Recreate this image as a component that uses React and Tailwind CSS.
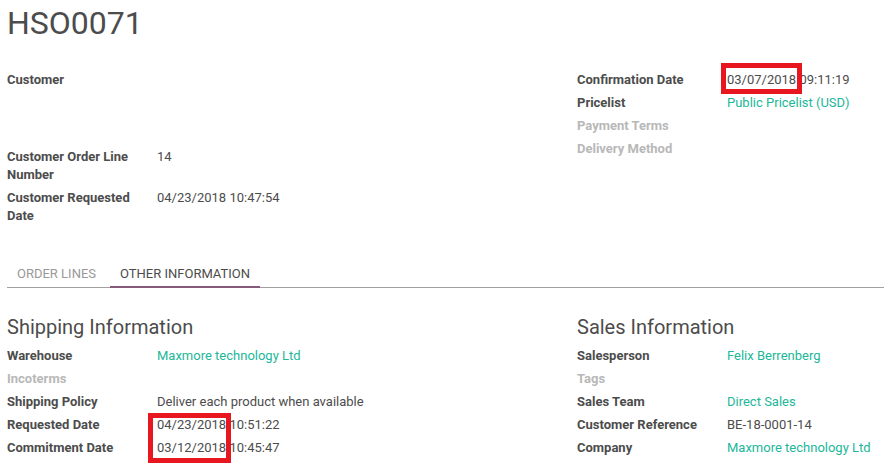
import React from "react";

const Field = ({ label, children, muted }) => (
  <div className="flex">
    <div
      className={`w-[150px] shrink-0 pr-[12px] font-bold ${
        muted ? "text-[#b8b8b8]" : "text-[#4c4c4c]"
      }`}
    >
      {label}
    </div>
    <div className="text-[#4c4c4c]">{children}</div>
  </div>
);

const Link = ({ children }) => (
  <span className="text-[#21b799]">{children}</span>
);

// red annotation box drawn over a date value
const Marked = ({ children, box }) => (
  <span className="relative">
    {children}
    <span className={`pointer-events-none absolute border-[5px] border-[#e8161e] ${box}`} />
  </span>
);

export default function App() {
  return (
    <div
      className="w-[884px] h-[464px] overflow-hidden bg-white pl-[7px] text-[13px] leading-[18px] text-[#4c4c4c]"
      style={{ fontFamily: "Roboto, 'Liberation Sans', sans-serif" }}
    >
      <h1 className="mt-[7px] text-[32px] leading-[32px] font-normal text-[#4c4c4c]">
        HSO0071
      </h1>

      <div className="mt-[32px] flex">
        <div className="w-[570px] shrink-0 flex flex-col gap-[5px]">
          <div className="h-[72px]">
            <Field label="Customer"></Field>
          </div>
          <Field label="Customer Order Line Number">14</Field>
          <Field label="Customer Requested Date">04/23/2018 10:47:54</Field>
        </div>
        <div className="flex-1 flex flex-col gap-[5px]">
          <Field label="Confirmation Date">
            <Marked box="-left-[6px] -top-[9px] w-[81px] h-[31px]">03/07/2018</Marked>{" "}
            09:11:19
          </Field>
          <Field label="Pricelist">
            <Link>Public Pricelist (USD)</Link>
          </Field>
          <Field label="Payment Terms" muted></Field>
          <Field label="Delivery Method" muted></Field>
        </div>
      </div>

      <div className="mt-[32px] flex border-b border-[#a0a0a0]">
        <div className="mr-[4px] px-[10px] pt-[8px] pb-[4px] text-[#999999]">
          ORDER LINES
        </div>
        <div className="-mb-px px-[10px] pt-[8px] pb-[3px] border-b-2 border-[#875a7b] text-[#4c4c4c]">
          OTHER INFORMATION
        </div>
      </div>

      <div className="mt-[27px] flex">
        <div className="w-[570px] shrink-0">
          <h2 className="text-[20px] leading-[24px] font-normal text-[#4c4c4c]">
            Shipping Information
          </h2>
          <div className="mt-[8px] flex flex-col gap-[5px]">
            <Field label="Warehouse">
              <Link>Maxmore technology Ltd</Link>
            </Field>
            <Field label="Incoterms" muted></Field>
            <Field label="Shipping Policy">Deliver each product when available</Field>
            <Field label="Requested Date">
              <Marked box="-left-[9px] -top-[4px] w-[83px] h-[50px]">04/23/2018</Marked>{" "}
              10:51:22
            </Field>
            <Field label="Commitment Date">03/12/2018 10:45:47</Field>
          </div>
        </div>
        <div className="flex-1">
          <h2 className="text-[20px] leading-[24px] font-normal text-[#4c4c4c]">
            Sales Information
          </h2>
          <div className="mt-[8px] flex flex-col gap-[5px]">
            <Field label="Salesperson">
              <Link>Felix Berrenberg</Link>
            </Field>
            <Field label="Tags" muted></Field>
            <Field label="Sales Team">
              <Link>Direct Sales</Link>
            </Field>
            <Field label="Customer Reference">BE-18-0001-14</Field>
            <Field label="Company">
              <Link>Maxmore technology Ltd</Link>
            </Field>
          </div>
        </div>
      </div>
    </div>
  );
}
